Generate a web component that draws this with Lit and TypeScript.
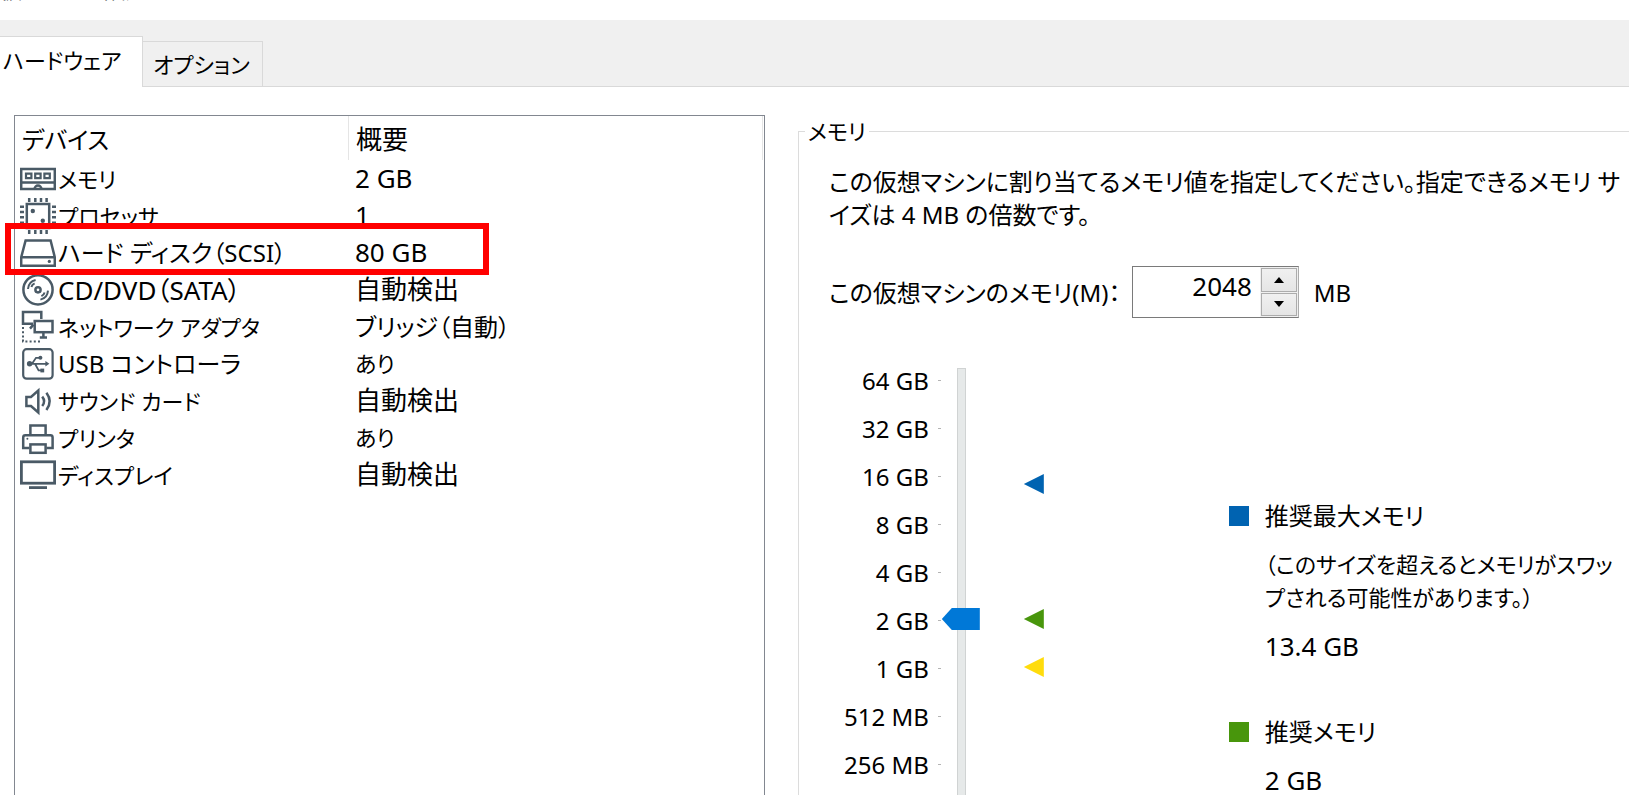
import { LitElement, html, svg, css, nothing } from "lit";
import { customElement, property, state } from "lit/decorators.js";

const icons: Record<string, unknown> = {
  memory: svg`
    <rect x="1.2" y="8" width="33.6" height="20" />
    <path d="M1 21.5H35M14.6 28a3.4 3.4 0 0 1 6.8 0" />
    <path stroke-width="2.2" d="M6 12.6h5.4v4.6H6zM15.2 12.6h5.4v4.6h-5.4zM24.4 12.6h5.4v4.6h-5.4z" />`,
  cpu: svg`
    <rect x="6.8" y="6" width="22.4" height="24" />
    <path d="M9.2 0v4M15.3 0v4M21 0v4M26.6 0v4M9.2 32v4M15.3 32v4M21 32v4M26.6 32v4M0 8.7h4M0 14h4M0 19.3h4M0 24.7h4M32 8.7h4M32 14h4M32 19.3h4M32 24.7h4" />
    <g class="solid"><circle cx="12.8" cy="13" r="2.2" /><circle cx="22.8" cy="22.8" r="2.2" /></g>`,
  disk: svg`
    <path d="M1.2 30.7V22.3L5.6 5.4H30.6L34.8 22.3V30.7ZM1.2 22.3H34.8" />
    <circle class="solid" cx="29.3" cy="26.4" r="1.6" />`,
  disc: svg`
    <circle cx="18" cy="17.8" r="14.6" /><circle cx="18" cy="17.8" r="2.6" />
    <path stroke-width="2" d="M8 17Q8.6 9.6 15.6 8M11.4 15Q12 12.6 14.6 11.4M28 18.6Q27.4 26 20.4 27.6M24.6 20.6Q24 23 21.4 24.2" />`,
  network: svg`
    <path d="M13 14.7H3V3H21.3V10" /><rect x="14.7" y="12" width="17.8" height="11.2" />
    <path d="M23.4 23.2v5M19.8 28.4h7.2M10 19.6l3.4-4" />
    <path stroke-width="2" stroke-dasharray="2 2.2" d="M3 18v14.4h19" />`,
  usb: svg`
    <rect x="3.2" y="3.2" width="29.4" height="29.4" rx="3.4" stroke-width="2.2" />
    <path stroke-width="1.8" d="M9.5 17.8H27M12 17.8L16 11.8H20M15 17.8L18.6 24.4H22" />
    <g class="solid"><circle cx="9.6" cy="17.8" r="2.7" /><circle cx="20.4" cy="11.7" r="2" /><rect x="20.4" y="22.6" width="3.8" height="3.8" /><path d="M25.4 15v5.6l4-2.8z" /></g>`,
  sound: svg`
    <path d="M6.4 14V23H11L18.3 29.4V7.6L11 14Z" />
    <path d="M22.2 13.6Q26 18.4 22.2 23M26.4 9.8Q33 18.4 26.4 27" />`,
  printer: svg`
    <path d="M10.4 14.8V5.6H25.6V14.8M9.4 28H3.2V17.4Q3.2 15.2 5.4 15.2H30.4Q32.6 15.2 32.6 17.4V28H26.4" />
    <rect x="10.4" y="24.4" width="15.2" height="8.4" /><circle class="solid" cx="7.4" cy="18.8" r="1" />`,
  display: svg`
    <rect stroke-width="2.8" x="1.4" y="4.8" width="33.2" height="21.4" />
    <path stroke-width="2.8" d="M9 30.6h18" />`,
};

interface Device {
  icon: string;
  name: string;
  nameSize: string;
  summary: string;
  summarySize?: string;
  marked?: boolean;
}

const devices: Device[] = [
  { icon: "memory", name: "メモリ", nameSize: "small", summary: "2 GB" },
  { icon: "cpu", name: "プロセッサ", nameSize: "small", summary: "1" },
  { icon: "disk", name: "ハード ディスク（SCSI）", nameSize: "medium", summary: "80 GB", marked: true },
  { icon: "disc", name: "CD/DVD（SATA）", nameSize: "large", summary: "自動検出" },
  { icon: "network", name: "ネットワーク アダプタ", nameSize: "small", summary: "ブリッジ（自動）", summarySize: "medium" },
  { icon: "usb", name: "USB コントローラ", nameSize: "medium", summary: "あり", summarySize: "small" },
  { icon: "sound", name: "サウンド カード", nameSize: "small", summary: "自動検出" },
  { icon: "printer", name: "プリンタ", nameSize: "small", summary: "あり", summarySize: "small" },
  { icon: "display", name: "ディスプレイ", nameSize: "small", summary: "自動検出" },
];

const scale = ["64 GB", "32 GB", "16 GB", "8 GB", "4 GB", "2 GB", "1 GB", "512 MB", "256 MB", "128 MB", "64 MB", "32 MB", "16 MB", "8 MB", "4 MB"];
const STEP = 48;
const THUMB = 22;
const markers = [
  { tone: "blue", level: 2.2 },
  { tone: "green", level: 5 },
  { tone: "yellow", level: 6 },
];

const base = css`
  *, *::before, *::after { box-sizing: border-box; }
  button, input { font: inherit; color: inherit; }
  .small { font-size: 22px; }
  .medium { font-size: 24px; }
  .large { font-size: 26px; }
`;

@customElement("device-list")
class DeviceList extends LitElement {
  static styles = [
    base,
    css`
      :host { display: block; padding-right: 1px; border: 1px solid #828790; background: #fff; }
      .table { width: 100%; border-collapse: separate; border-spacing: 0; table-layout: fixed; }
      .name-col { width: 334px; }
      th { height: 44px; padding: 2px 7px 0; text-align: left; font-weight: 400; border-right: 1px solid #e5e5e5; }
      td { height: 37px; padding: 0 6px; white-space: nowrap; }
      td:first-child { padding: 0 0 0 5px; }
      .device { display: flex; align-items: center; gap: 2px; height: 37px; line-height: 36px; }
      .icon { width: 36px; height: 36px; flex: none; fill: none; stroke: #4a5a66; stroke-width: 2.5; }
      .solid { fill: #4a5a66; stroke: none; }
      .marked { position: relative; }
      .mark { position: absolute; left: -10px; top: -11px; width: 484px; height: 52px; border: 6px solid #f00; pointer-events: none; }
    `,
  ];
  render() {
    return html`<table class="table">
      <colgroup><col class="name-col" /><col /></colgroup>
      <thead><tr><th scope="col" class="medium">デバイス</th><th scope="col" class="large">概要</th></tr></thead>
      <tbody>
        ${devices.map(
          (d) => html`<tr class=${d.marked ? "marked" : ""}>
            <td><div class="device"><svg class="icon" viewBox="0 0 36 36" aria-hidden="true">${icons[d.icon]}</svg><span class=${d.nameSize}>${d.name}</span></div></td>
            <td class=${d.summarySize ?? "large"}>${d.summary}${d.marked ? html`<span class="mark"></span>` : nothing}</td>
          </tr>`
        )}
      </tbody>
    </table>`;
  }
}

@customElement("memory-slider")
class MemorySlider extends LitElement {
  @property({ type: Number }) level = 5;
  static styles = [
    base,
    css`
      :host { display: flex; align-items: flex-start; }
      .scale { list-style: none; margin: -12px 1px 0 0; padding: 0; width: 112px; }
      .step { display: flex; align-items: center; justify-content: flex-end; gap: 9px; height: 48px; white-space: nowrap; }
      .step::after { content: ""; width: 3px; height: 1px; background: #b4b4b4; }
      .range {
        appearance: none; writing-mode: vertical-lr; direction: rtl; margin: 0; width: 38px;
        background:
          linear-gradient(#e6e9e9, #e6e9e9) 16px 1px / 7px 100% no-repeat,
          linear-gradient(#d0d3d3, #d0d3d3) 15px 0 / 9px 100% no-repeat;
      }
      .range::-webkit-slider-thumb {
        appearance: none; width: 38px; height: 22px; border: 0; background: #0078d7;
        clip-path: polygon(0 50%, 10px 0, 100% 0, 100% 100%, 10px 100%);
      }
      .markers { position: relative; width: 20px; margin-left: 44px; }
      .marker { position: absolute; left: 0; width: 20px; height: 20px; clip-path: polygon(0 50%, 100% 0, 100% 100%); }
      .blue { background: #0063b1; }
      .green { background: #48960c; }
      .yellow { background: #ffdc0c; }
    `,
  ];
  render() {
    const span = (scale.length - 1) * STEP + THUMB;
    return html`
      <ul class="scale medium">${scale.map((s) => html`<li class="step">${s}</li>`)}</ul>
      <input class="range" type="range" aria-label="メモリ" min="0" max=${scale.length - 1}
        .value=${String(scale.length - 1 - this.level)} style="height:${span}px" />
      <div class="markers">
        ${markers.map((m) => html`<span class="marker ${m.tone}" style="top:${Math.floor(m.level * STEP) + 1}px"></span>`)}
      </div>`;
  }
}

@customElement("app-root")
class AppRoot extends LitElement {
  @state() private memory = 2048;
  static styles = [
    base,
    css`
      :host {
        display: flex; flex-direction: column; height: 100vh; overflow: hidden; background: #fff; color: #000;
        font: 26px/33px "Noto Sans", "Noto Sans CJK JP", sans-serif;
        font-feature-settings: "palt";
      }
      .title { flex: none; height: 20px; margin: 0; overflow: hidden; font-weight: 400; }
      .title-text { display: block; margin-top: -27px; }
      .tabs { flex: none; display: flex; align-items: flex-end; height: 67px; background: #f0f0f0; box-shadow: inset 0 -1px #d9d9d9; }
      .tab { height: 46px; padding: 0 14px 0 10px; border: 1px solid #d9d9d9; border-left: 0; background: #f0f0f0; width: 120px; white-space: nowrap; text-align: left; }
      .tab.active { width: 143px; height: 51px; padding: 0 20px 4px 3px; background: #fff; border-bottom: 0; }
      .main { flex: none; display: flex; gap: 33px; padding: 28px 0 0 14px; }
      .devices { flex: 754 1 0; min-width: 0; }
      .group { flex: 831 1 0; min-width: 0; margin: 0; padding: 18px 0 0 6px; border: 1px solid #dcdcdc; border-right: 0; }
      .legend { padding: 0 3px; line-height: 32px; }
      .inner { padding-left: 24px; }
      .text { margin: 0; white-space: nowrap; }
      .field { display: flex; align-items: center; margin: 35px 0 50px; height: 52px; }
      .label { width: 303px; white-space: nowrap; }
      .spin { display: flex; width: 167px; height: 52px; margin-right: 15px; border: 1px solid #7a7a7a; border-right-color: #acacac; }
      .value { flex: 1; min-width: 0; border: 0; padding: 0 8px 12px 0; text-align: right; background: none; outline: none; }
      .arrows { display: grid; grid-template-rows: 1fr 1fr; gap: 1px; width: 38px; padding: 1px; background: #f0f0f0; }
      .arrow { display: grid; place-items: center; padding: 0; border: 1px solid #acacac; background: linear-gradient(#f0f0f0, #e5e5e5); }
      .tri { width: 10px; height: 6px; fill: #000; }
      .levels { display: flex; align-items: flex-start; }
      .slider { flex: 0 0 auto; width: 215px; margin-right: 185px; }
      .key { flex: 1; min-width: 0; padding-top: 131px; display: grid; gap: 52px; }
      .item { display: grid; grid-template-columns: 20px 1fr; column-gap: 16px; row-gap: 16px; align-items: center; }
      .swatch { width: 20px; height: 20px; background: #0063b1; }
      .swatch.green { background: #48960c; }
      .item .text { grid-column: 2; }
    `,
  ];
  private nudge(by: number) {
    this.memory += by;
  }
  render() {
    return html`
      <h1 class="title small"><span class="title-text">仮想マシン設定</span></h1>
      <nav class="tabs" role="tablist">
        <button class="tab small active" role="tab" aria-selected="true">ハードウェア</button>
        <button class="tab small" role="tab" aria-selected="false">オプション</button>
      </nav>
      <main class="main">
        <device-list class="devices"></device-list>
        <fieldset class="group">
          <legend class="legend small">メモリ</legend>
          <div class="inner">
            <p class="text medium">この仮想マシンに割り当てるメモリ値を指定してください。指定できるメモリ サ<br />イズは 4 MB の倍数です。</p>
            <div class="field">
              <label class="label medium" for="memory">この仮想マシンのメモリ(M)：</label>
              <div class="spin">
                <input class="value" id="memory" type="text" inputmode="numeric" .value=${String(this.memory)} />
                <div class="arrows">
                  <button class="arrow" aria-label="増やす" @click=${() => this.nudge(4)}><svg class="tri" viewBox="0 0 10 6"><path d="M0 6L5 0L10 6Z" /></svg></button>
                  <button class="arrow" aria-label="減らす" @click=${() => this.nudge(-4)}><svg class="tri" viewBox="0 0 10 6"><path d="M0 0L5 6L10 0Z" /></svg></button>
                </div>
              </div>
              <span class="medium">MB</span>
            </div>
            <div class="levels">
              <memory-slider class="slider" .level=${5}></memory-slider>
              <div class="key">
                <section class="item">
                  <span class="swatch"></span>
                  <p class="text medium">推奨最大メモリ</p>
                  <p class="text small">（このサイズを超えるとメモリがスワッ<br />プされる可能性があります。）</p>
                  <p class="text">13.4 GB</p>
                </section>
                <section class="item">
                  <span class="swatch green"></span>
                  <p class="text medium">推奨メモリ</p>
                  <p class="text">2 GB</p>
                </section>
              </div>
            </div>
          </div>
        </fieldset>
      </main>`;
  }
}
